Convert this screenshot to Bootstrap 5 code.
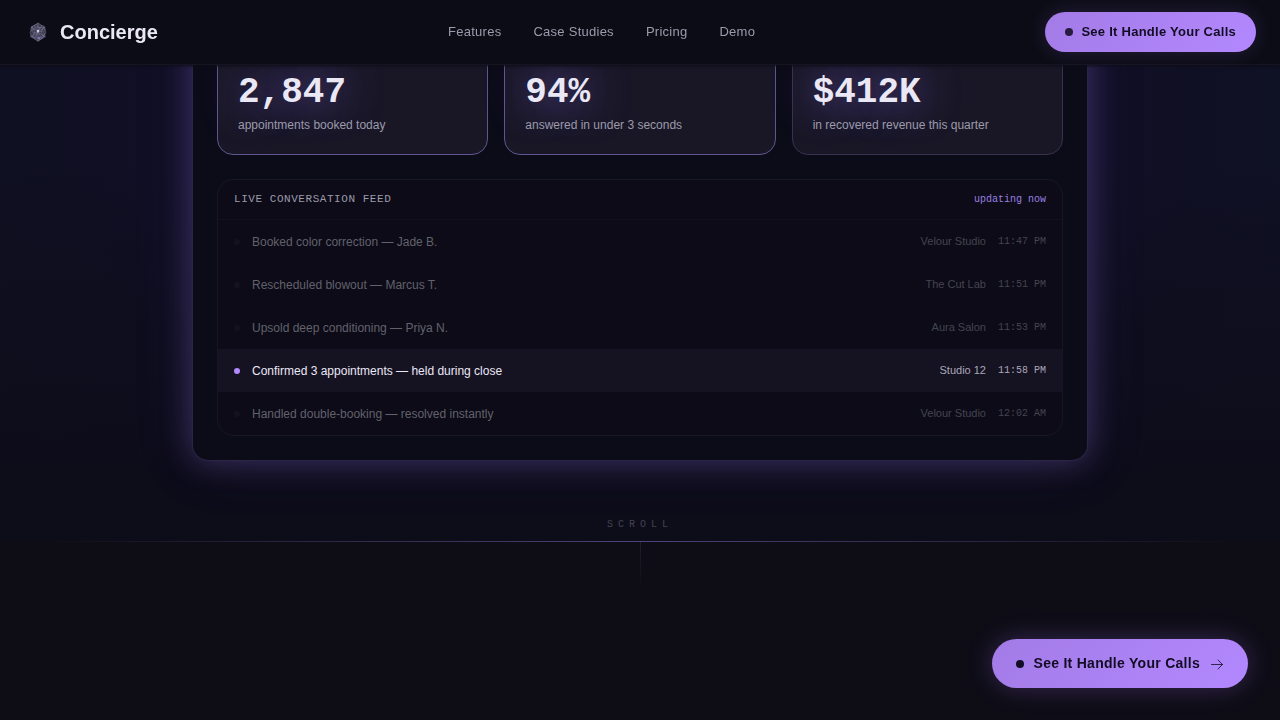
<!DOCTYPE html>
<html lang="en" data-bs-theme="dark">
<head>
<meta charset="utf-8">
<meta name="viewport" content="width=device-width, initial-scale=1">
<title>Concierge</title>
<link href="https://cdn.jsdelivr.net/npm/bootstrap@5.3.0/dist/css/bootstrap.min.css" rel="stylesheet">
<style>
:root{--ink:#0e0d16;--text:#ebe8f6;--muted:#9c9aab;--violet:#b18aff}
body{font-family:"Liberation Sans",Arial,sans-serif;background:var(--ink);color:var(--text);min-height:100vh}
.mono{font-family:"Liberation Mono",monospace}
.topbar{background:#0c0c16;border-bottom:1px solid #161421;height:65px;box-shadow:0 1px 3px #0c0c15}
.brand{font-size:20px;line-height:28px;color:var(--text);font-weight:700}
.menu a{font-size:13px;line-height:20px;letter-spacing:.02em;color:var(--muted);text-decoration:none}
.menu a:hover{color:var(--text)}
.cta{background:linear-gradient(135deg,#a37be6,#b388ff);color:#120d24;font-weight:700;border:0;border-radius:999px;letter-spacing:.02em;display:inline-flex;align-items:center;white-space:nowrap}
.cta:hover{background:#b890ff;color:#120d24}
.cta-sm{font-size:13px;line-height:20px;padding:10px 20px;gap:8px;box-shadow:0 0 20px rgba(177,138,255,.16)}
.cta-lg{font-size:14px;line-height:21px;padding:14px 24px;gap:10px;box-shadow:0 0 24px rgba(160,110,240,.28)}
.dot{width:8px;height:8px;border-radius:50%;background:#120d24;flex:none}
.cta-sm .dot{background:#261b40}
.hero{background:linear-gradient(180deg,rgba(14,13,26,0) 30%,#0d0c19 90%),linear-gradient(90deg,#0f1022 0,#110f25 15%,#110f25 85%,#0f1124 100%)}
.panel{max-width:896px;background:#0c0b18;border:1px solid #2b2548;border-top:0;border-radius:0 0 16px 16px;padding:24px;
 box-shadow:0 0 30px rgba(116,92,180,.42),0 0 60px rgba(90,70,160,.16)}
.stat{background:#191726;border:1px solid #5f5690;border-radius:16px;padding:50px 20px 20px}
.stat-dim{border-color:#37324f}
.figure-num{font-size:36px;line-height:36px;font-weight:700;text-shadow:0 0 40px rgba(139,108,230,.9);margin-bottom:5px}
.stat-label{font-size:12px;line-height:18px;color:var(--muted)}
.feed{background:#0c0b17;border:1px solid #171622;border-radius:16px;margin-top:24px}
.feed-head{height:40px;padding:0 16px;border-bottom:1px solid #11101c}
.feed-title{font-size:11px;letter-spacing:.05em;font-weight:400;color:var(--muted)}
.feed-state{font-size:10px;color:#9a7fe0}
.feed-row{height:43px;padding:0 16px;gap:12px;color:#62616c}
.feed-row .bead{width:6px;height:6px;border-radius:50%;background:#13121d;flex:none}
.feed-row .what{font-size:12px}
.feed-row .place{font-size:11px;color:#454451}
.feed-row time{font-size:10px;color:#454451}
.feed-row.live{background:#151222;color:var(--text)}
.live .bead{background:var(--violet)}
.feed-row.live .place,.feed-row.live time{color:#aaa7b9}
.scroll-cue{font-size:10px;line-height:16px;letter-spacing:.5em;color:#454355;padding:56px 0 8px}
.rule{height:1px;background:linear-gradient(90deg,transparent 3%,#4d4379 50%,transparent 97%)}
.stem{width:1px;height:48px;background:linear-gradient(#211e2d,transparent)}
</style>
</head>
<body>
<header class="topbar fixed-top d-flex align-items-center justify-content-between px-4">
  <a href="#" class="brand d-flex align-items-center gap-2 text-decoration-none">
    <svg width="28" height="28" viewBox="0 0 28 28" fill="none" aria-hidden="true">
      <path d="M14 5l3 2 4 1 1 4-1 3 1 4-4 2-4 3-4-3-4-2 1-4-1-3 1-4 4-1z" fill="#393650"/>
      <g stroke="#858096" stroke-width=".5"><path d="M14 5v18M7 9l14 10M21 9L7 19M14 5l6 4-3 5 3 5-6 4-6-4 3-5-3-5zM10 7l8 14M18 7l-8 14M6 14l6-5 8 1 2 5-7 6-8-3z"/><path d="M7 10l5-4 4 4-2 4-5 1zM21 17l-5 5-4-4 2-4 5-1z" stroke="#aaa4bd" opacity=".5"/></g>
      <circle cx="14" cy="13" r="1.200" fill="#d5cfe5"/><circle cx="15" cy="20" r="1.200" fill="#7774bd"/>
    </svg>
    <span>Concierge</span>
  </a>
  <nav class="menu d-none d-md-flex" style="gap:32px" aria-label="Main">
    <a href="#features">Features</a><a href="#cases">Case Studies</a><a href="#pricing">Pricing</a><a href="#demo">Demo</a>
  </nav>
  <button type="button" class="cta cta-sm"><span class="dot"></span>See It Handle Your Calls</button>
</header>

<main>
  <section class="hero">
    <div class="panel mx-auto">
      <div class="row row-cols-3 gx-3">
        <div class="col"><div class="stat"><div class="figure-num mono">2,847</div><div class="stat-label">appointments booked today</div></div></div>
        <div class="col"><div class="stat"><div class="figure-num mono">94%</div><div class="stat-label">answered in under 3 seconds</div></div></div>
        <div class="col"><div class="stat stat-dim"><div class="figure-num mono">$412K</div><div class="stat-label">in recovered revenue this quarter</div></div></div>
      </div>
      <div class="feed overflow-hidden">
        <div class="feed-head d-flex align-items-center justify-content-between">
          <h2 class="feed-title mono m-0">LIVE CONVERSATION FEED</h2><span class="feed-state mono">updating now</span>
        </div>
        <ul class="list-unstyled m-0">
          <li class="feed-row d-flex align-items-center"><span class="bead"></span><span class="what me-auto">Booked color correction — Jade B.</span><span class="place">Velour Studio</span><time class="mono">11:47 PM</time></li>
          <li class="feed-row d-flex align-items-center"><span class="bead"></span><span class="what me-auto">Rescheduled blowout — Marcus T.</span><span class="place">The Cut Lab</span><time class="mono">11:51 PM</time></li>
          <li class="feed-row d-flex align-items-center"><span class="bead"></span><span class="what me-auto">Upsold deep conditioning — Priya N.</span><span class="place">Aura Salon</span><time class="mono">11:53 PM</time></li>
          <li class="feed-row live d-flex align-items-center"><span class="bead"></span><span class="what me-auto">Confirmed 3 appointments — held during close</span><span class="place">Studio 12</span><time class="mono">11:58 PM</time></li>
          <li class="feed-row d-flex align-items-center"><span class="bead"></span><span class="what me-auto">Handled double-booking — resolved instantly</span><span class="place">Velour Studio</span><time class="mono">12:02 AM</time></li>
        </ul>
      </div>
    </div>
    <div class="scroll-cue mono text-center">SCROLL</div>
  </section>
  <div class="rule"></div>
  <div class="stem mx-auto"></div>
</main>

<div class="position-fixed bottom-0 end-0 p-4 m-2">
  <button type="button" class="cta cta-lg"><span class="dot"></span>See It Handle Your Calls
    <svg width="14" height="14" viewBox="0 0 14 14" fill="none" stroke="currentColor" stroke-width=".8" stroke-linecap="round" stroke-linejoin="round" aria-hidden="true"><path d="M1.500 7.500h11M8 3l4.500 4.500L8 12"/></svg>
  </button>
</div>
<script src="https://cdn.jsdelivr.net/npm/bootstrap@5.3.0/dist/js/bootstrap.bundle.min.js"></script>
</body>
</html>
